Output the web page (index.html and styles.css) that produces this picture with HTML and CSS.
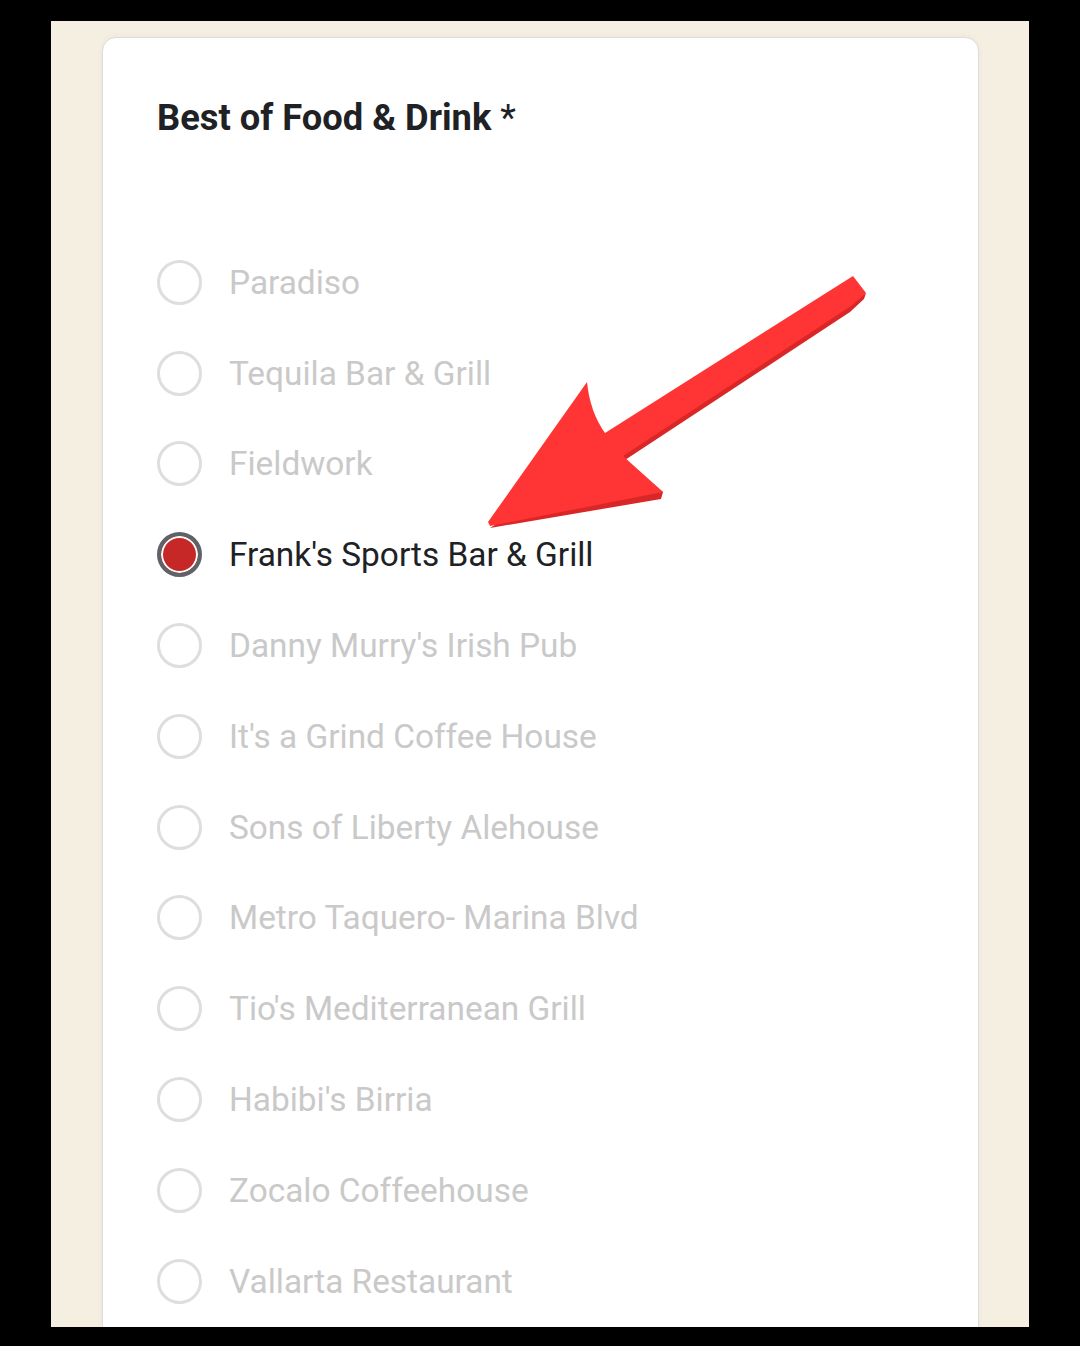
FILE: index.html
```html
<!DOCTYPE html>
<html>
<head>
<title>Best of Food &amp; Drink</title>
<link rel="stylesheet" href="styles.css">
<meta charset="utf-8">
</head>
<body>
<div class="frame">

<div class="card">

<h2 class="question">Best of Food &amp; Drink <span class="req">*</span></h2>

<div class="options">
<label class="option"><span class="radio"></span><span class="label">Paradiso</span></label>
<label class="option"><span class="radio"></span><span class="label">Tequila Bar &amp; Grill</span></label>
<label class="option"><span class="radio"></span><span class="label">Fieldwork</span></label>
<label class="option selected"><span class="radio"></span><span class="label">Frank's Sports Bar &amp; Grill</span></label>
<label class="option"><span class="radio"></span><span class="label">Danny Murry's Irish Pub</span></label>
<label class="option"><span class="radio"></span><span class="label">It's a Grind Coffee House</span></label>
<label class="option"><span class="radio"></span><span class="label">Sons of Liberty Alehouse</span></label>
<label class="option"><span class="radio"></span><span class="label">Metro Taquero- Marina Blvd</span></label>
<label class="option"><span class="radio"></span><span class="label">Tio's Mediterranean Grill</span></label>
<label class="option"><span class="radio"></span><span class="label">Habibi's Birria</span></label>
<label class="option"><span class="radio"></span><span class="label">Zocalo Coffeehouse</span></label>
<label class="option"><span class="radio"></span><span class="label">Vallarta Restaurant</span></label>
</div>

</div>

<!-- red pointer drawn over the list -->
<svg class="arrow" width="1080" height="1346" viewBox="0 0 1080 1346">
<polygon fill="#d92626" points="866,293 864,299 850,312 625,460 663,492 661,499 490,528 "/>
<path fill="#ff3535" d="M853,276 L866,293 L851,306 L623,456 L663,492 L490,526 L488,522 L587,382 Q590,412 605,433 Z"/>
</svg>

</div>
</body>
</html>
```

FILE: styles.css
```css
*
{
padding:0;
margin:0;
box-sizing:border-box;
}

body
{
background-color:#000;
font-family:Roboto, "Noto Sans", sans-serif;
}

.frame
{
position:relative;
margin:21px 51px 0 51px;
height:1306px;
padding:16px 50px 0 51px;
background-color:#f4efe1;
overflow:hidden;
}

.card
{
height:1400px;
background-color:#fff;
border:1px solid #dadce0;
border-radius:14px;
padding:58px 54px 0 54px;
box-shadow:0 -1px 6px rgba(0,0,0,0.04);
}

.question
{
font-size:36.3px;
font-weight:700;
line-height:44px;
color:#202124;
}

.req
{
font-weight:400;
}

.options
{
display:flex;
flex-direction:column;
margin-top:97px;
}

.option
{
display:flex;
align-items:center;
height:90.8px;
}

.radio
{
width:45px;
height:45px;
border:3px solid #dedede;
border-radius:50%;
margin-right:27px;
flex-shrink:0;
}

.label
{
font-size:33.4px;
color:#c9c9c9;
}

.selected .radio
{
border:4px solid #5f6368;
background-color:#c62828;
box-shadow:inset 0 0 0 2px #fff;
}

.selected .label
{
color:#202124;
}

.arrow
{
position:absolute;
left:-51px;
top:-21px;
pointer-events:none;
}
```
